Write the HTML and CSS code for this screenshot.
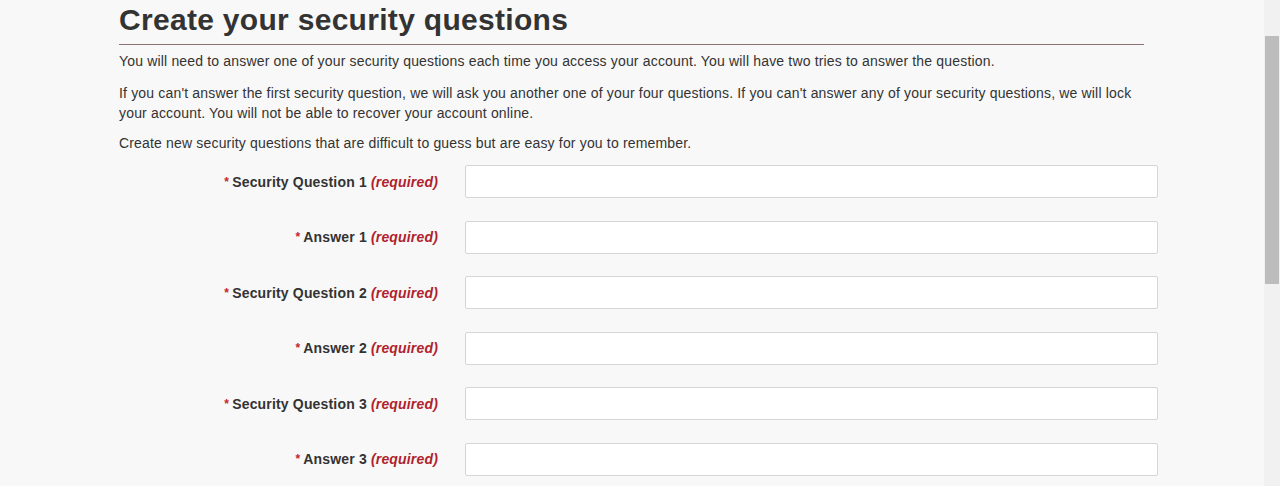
FILE: index.html
```html
<!DOCTYPE html>
<html lang="en">
<head>
<meta charset="utf-8">
<title>Create your security questions</title>
<link rel="stylesheet" href="styles.css">
</head>
<body>
<main class="page">
  <h1 class="title">Create your security questions</h1>
  <p class="intro first">You will need to answer one of your security questions each time you access your account. You will have two tries to answer the question.</p>
  <p class="intro">If you can't answer the first security question, we will ask you another one of your four questions. If you can't answer any of your security questions, we will lock your account. You will not be able to recover your account online.</p>
  <p class="intro">Create new security questions that are difficult to guess but are easy for you to remember.</p>
  <form class="form">
    <div class="row"><label class="label" for="q1"><span class="star">*</span>Security Question 1 <em class="req">(required)</em></label><input class="field" id="q1" type="text"></div>
    <div class="row"><label class="label" for="a1"><span class="star">*</span>Answer 1 <em class="req">(required)</em></label><input class="field" id="a1" type="text"></div>
    <div class="row"><label class="label" for="q2"><span class="star">*</span>Security Question 2 <em class="req">(required)</em></label><input class="field" id="q2" type="text"></div>
    <div class="row"><label class="label" for="a2"><span class="star">*</span>Answer 2 <em class="req">(required)</em></label><input class="field" id="a2" type="text"></div>
    <div class="row"><label class="label" for="q3"><span class="star">*</span>Security Question 3 <em class="req">(required)</em></label><input class="field" id="q3" type="text"></div>
    <div class="row"><label class="label" for="a3"><span class="star">*</span>Answer 3 <em class="req">(required)</em></label><input class="field" id="a3" type="text"></div>
  </form>
</main>
<div class="scrollbar"><div class="thumb"></div></div>
</body>
</html>
```
FILE: styles.css
```css
html, body {
  margin: 0;
  padding: 0;
  height: 486px;
  overflow: hidden;
}
body {
  background: #f8f8f8;
  font-family: "Liberation Sans", Arial, sans-serif;
  color: #333;
}
.page {
  width: 1025px;
  margin-left: 119px;
}
.title {
  margin: 0;
  padding-top: 3px;
  font-size: 30px;
  line-height: 34px;
  font-weight: bold;
  letter-spacing: 0.3px;
  color: #333;
  border-bottom: 1px solid #8c7474;
  padding-bottom: 7px;
}
.intro {
  margin: 0 0 10px;
  font-size: 14px;
  line-height: 20px;
  letter-spacing: 0.17px;
}
.intro.first {
  margin-top: 6px;
  margin-bottom: 12px;
}
.form {
  margin-top: 12px;
  width: 1040px;
}
.row {
  display: flex;
  align-items: center;
  height: 33px;
  margin-bottom: 22.6px;
}
.label {
  width: 319px;
  text-align: right;
  font-size: 14px;
  font-weight: bold;
  letter-spacing: 0.17px;
  color: #333;
  padding-right: 27px;
}
.star {
  color: #c3262e;
  font-size: 12px;
  margin-right: 3px;
  vertical-align: 1px;
}
.req {
  color: #b01f2c;
  font-style: italic;
  font-weight: bold;
}
.field {
  box-sizing: border-box;
  width: 693px;
  height: 33px;
  margin: 0;
  border: 1px solid #d6d6d6;
  border-radius: 2px;
  background: #fff;
  font-size: 14px;
}
.scrollbar {
  position: fixed;
  top: 0;
  right: 0;
  width: 16px;
  height: 486px;
  background: #f1f1f1;
}
.thumb {
  position: absolute;
  top: 36px;
  left: 1px;
  width: 14px;
  height: 248px;
  background: #bcbcbc;
}
```
